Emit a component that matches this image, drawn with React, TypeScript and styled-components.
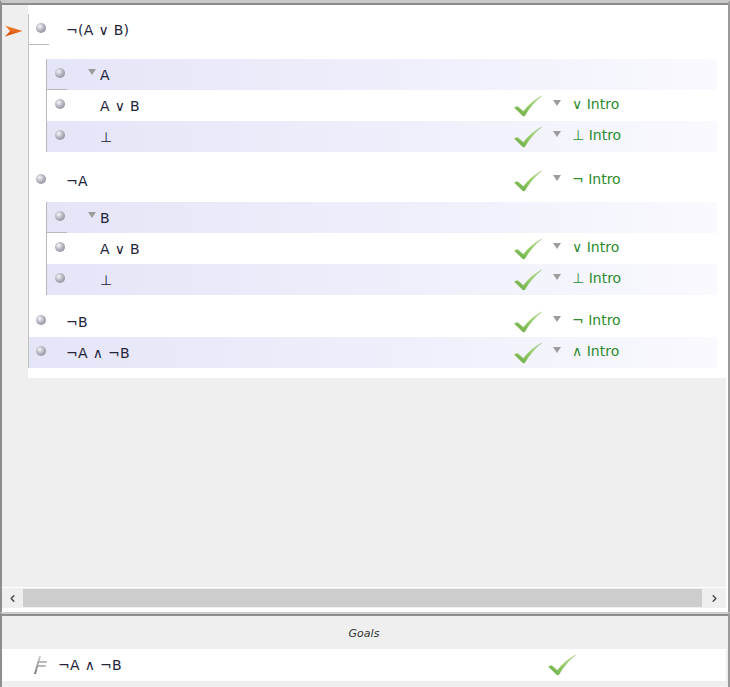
import React from "react";
import styled, { createGlobalStyle } from "styled-components";
import { ChevronLeft, ChevronRight } from "lucide-react";

const GlobalStyle = createGlobalStyle`
	html, body {
		margin: 0;
		padding: 0;
		background: #ffffff;
	}
	body {
		font-family: "DejaVu Sans", Verdana, sans-serif;
	}
	* {
		box-sizing: border-box;
	}
`;

const Frame = styled.div`
	width: 730px;
	height: 687px;
	display: flex;
	flex-direction: column;
	background: #ffffff;
	overflow: hidden;
`;

const ProofPanel = styled.div`
	flex: 1;
	display: flex;
	flex-direction: column;
	border-top: 3px solid #c9c9c9;
	border-left: 2px solid #8e8e8e;
	border-right: 2px solid #9a9a9a;
	box-shadow: inset 0 2px 0 #8c8c8c;
	padding-top: 2px;
	padding-bottom: 4px;
	background: #ffffff;
`;

const ScrollArea = styled.div`
	flex: 1;
	display: flex;
	align-items: flex-start;
	margin-right: 2px;
	background: #efefef;
`;

const Gutter = styled.div`
	width: 26px;
	flex: none;
	padding: 17px 0 0 3px;
`;

const Sheet = styled.div`
	flex: 1;
	background: #ffffff;
	padding: 9px 0 10px 0;
`;

const MainProof = styled.div`
	border-left: 1px solid #c2c2c2;
	display: flex;
	flex-direction: column;
`;

const Subproof = styled.div<{ $top: number }>`
	margin: ${(p) => p.$top}px 0 0 17px;
	border-left: 1px solid #b8b8b8;
	display: flex;
	flex-direction: column;
`;

const Row = styled.div<{ $shaded?: boolean; $top?: number; $sub?: boolean; $mark?: boolean }>`
	position: relative;
	display: grid;
	grid-template-columns: 1fr 203px;
	align-items: center;
	height: 31px;
	margin: ${(p) => p.$top ?? 0}px 9px 0 0;
	padding-left: ${(p) => (p.$sub ? 8 : 7)}px;
	background: ${(p) =>
		p.$shaded
			? "linear-gradient(to right, #e5e5f8 0%, #ededfb 45%, #f9f9fe 100%)"
			: "transparent"};

	&::after {
		content: "";
		display: ${(p) => (p.$mark ? "block" : "none")};
		position: absolute;
		left: 0;
		bottom: 0;
		width: 20px;
		height: 1px;
		background: #b8b8b8;
	}
`;

const Left = styled.div`
	display: flex;
	align-items: center;
`;

const Bullet = styled.span`
	width: 10px;
	height: 10px;
	border-radius: 50%;
	flex: none;
	margin-top: -4px;
	background: radial-gradient(circle at 38% 35%, #f6f6fa 0%, #b4b4c0 45%, #7c7c8a 100%);
`;

const Formula = styled.span<{ $indent: number }>`
	margin-left: ${(p) => p.$indent}px;
	font-size: 14px;
	color: #24243a;
	white-space: pre;
	letter-spacing: 0.3px;
`;

const Right = styled.div`
	display: flex;
	align-items: center;
`;

const RuleName = styled.span`
	margin-left: 11px;
	font-size: 14px;
	color: #2e8c2e;
	white-space: pre;
	margin-top: -3px;
`;

const Caret = styled.svg<{ $gap?: number }>`
	width: 8px;
	height: 6px;
	flex: none;
	margin-left: ${(p) => p.$gap ?? 0}px;
	margin-top: -6px;
`;

const ScrollBar = styled.div`
	height: 21px;
	display: flex;
	align-items: stretch;
	margin-right: 2px;
	border-top: 1px solid #ffffff;
	background: #efefef;
`;

const ScrollButton = styled.div<{ $w: number }>`
	width: ${(p) => p.$w}px;
	flex: none;
	display: flex;
	align-items: center;
	justify-content: center;
	color: #454545;
`;

const Track = styled.div`
	flex: 1;
	margin: 1px 0;
	background: #cdcdcd;
`;

const GoalsPanel = styled.div`
	height: 75px;
	flex: none;
	display: flex;
	flex-direction: column;
	border-top: 2px solid #cfcfcf;
	border-left: 2px solid #8e8e8e;
	border-right: 2px solid #9a9a9a;
	box-shadow: inset 0 2px 0 #8e8e8e;
	padding-top: 4px;
	background: #efefef;
`;

const GoalsHeader = styled.div`
	height: 31px;
	margin-right: 2px;
	display: flex;
	align-items: center;
	justify-content: center;
	font-size: 11px;
	font-style: italic;
	color: #333333;
`;

const GoalRow = styled.div`
	height: 32px;
	margin-right: 2px;
	display: flex;
	align-items: center;
	background: #ffffff;
	padding-left: 30px;
`;

const GoalText = styled.span`
	margin-left: 10px;
	font-size: 14px;
	color: #24243a;
	white-space: pre;
	letter-spacing: 0.3px;
`;

const GoalCheck = styled.div`
	margin-left: auto;
	margin-right: 150px;
	display: flex;
`;

function Check() {
	return (
		<svg width="28" height="22" viewBox="0 0 28 22">
			<defs>
				<linearGradient id="chk" x1="1" y1="0" x2="0" y2="1">
					<stop offset="0%" stopColor="#c2ea9c" />
					<stop offset="50%" stopColor="#92cc62" />
					<stop offset="100%" stopColor="#66aa42" />
				</linearGradient>
			</defs>
			<path
				d="M0.5 12.8 C1.8 11.6 3.2 11.3 4.2 12 L9.4 16.4 C14 10.6 20 5 27.6 1 C21.2 6 15.4 12.8 11 20.4 C10.5 21.3 9.2 21.3 8.5 20.6 Z"
				fill="url(#chk)"
				stroke="#74ae52"
				strokeWidth="0.35"
			/>
		</svg>
	);
}

function DownCaret({ gap }: { gap?: number }) {
	return (
		<Caret $gap={gap} viewBox="0 0 8 6">
			<polygon points="0,0 8,0 4,6" fill="#9c9c9c" />
		</Caret>
	);
}

function Justification({ rule }: { rule: string }) {
	return (
		<Right>
			<Check />
			<DownCaret gap={11} />
			<RuleName>{rule}</RuleName>
		</Right>
	);
}

type LineProps = {
	formula: string;
	rule?: string;
	shaded?: boolean;
	sub?: boolean;
	assume?: boolean;
	mark?: boolean;
	top?: number;
};

function ProofLine({ formula, rule, shaded, sub, assume, mark, top }: LineProps) {
	return (
		<Row $shaded={shaded} $sub={sub} $mark={mark} $top={top}>
			<Left>
				<Bullet />
				{assume ? (
					<>
						<DownCaret gap={23} />
						<Formula $indent={4}>{formula}</Formula>
					</>
				) : (
					<Formula $indent={sub ? 35 : 20}>{formula}</Formula>
				)}
			</Left>
			{rule ? <Justification rule={rule} /> : <span />}
		</Row>
	);
}

export default function App() {
	return (
		<>
			<GlobalStyle />
			<Frame>
				<ProofPanel>
					<ScrollArea>
						<Gutter>
							<svg width="18" height="12" viewBox="0 0 18 12">
								<defs>
									<linearGradient id="arr" x1="0" y1="0" x2="0" y2="1">
										<stop offset="0%" stopColor="#f7893a" />
										<stop offset="100%" stopColor="#d44a05" />
									</linearGradient>
								</defs>
								<polygon points="0,0.5 17.5,6 0,11.5 5,6" fill="url(#arr)" />
							</svg>
						</Gutter>
						<Sheet>
							<MainProof>
								<ProofLine formula="¬(A ∨ B)" mark />
								<Subproof $top={14}>
									<ProofLine formula="A" sub assume shaded mark />
									<ProofLine formula="A ∨ B" sub rule="∨ Intro" />
									<ProofLine formula="⊥" sub shaded rule="⊥ Intro" />
								</Subproof>
								<ProofLine formula="¬A" rule="¬ Intro" top={13} />
								<Subproof $top={6}>
									<ProofLine formula="B" sub assume shaded mark />
									<ProofLine formula="A ∨ B" sub rule="∨ Intro" />
									<ProofLine formula="⊥" sub shaded rule="⊥ Intro" />
								</Subproof>
								<ProofLine formula="¬B" rule="¬ Intro" top={11} />
								<ProofLine formula="¬A ∧ ¬B" shaded rule="∧ Intro" />
							</MainProof>
						</Sheet>
					</ScrollArea>
					<ScrollBar>
						<ScrollButton $w={21}>
							<ChevronLeft size={11} strokeWidth={3} />
						</ScrollButton>
						<Track />
						<ScrollButton $w={24}>
							<ChevronRight size={11} strokeWidth={3} />
						</ScrollButton>
					</ScrollBar>
				</ProofPanel>
				<GoalsPanel>
					<GoalsHeader>Goals</GoalsHeader>
					<GoalRow>
						<svg width="16" height="20" viewBox="0 0 16 20">
							<defs>
								<linearGradient id="tt" x1="0" y1="0" x2="0" y2="1">
									<stop offset="0%" stopColor="#d0d0d0" />
									<stop offset="100%" stopColor="#767676" />
								</linearGradient>
							</defs>
							<path d="M7 1 L9 1 L4 19 L2 19 Z" fill="url(#tt)" />
							<path d="M6.2 6 L15 6 L14.6 7.6 L5.8 7.6 Z" fill="url(#tt)" />
							<path d="M5.2 10 L14 10 L13.6 11.6 L4.8 11.6 Z" fill="url(#tt)" />
						</svg>
						<GoalText>¬A ∧ ¬B</GoalText>
						<GoalCheck>
							<Check />
						</GoalCheck>
					</GoalRow>
				</GoalsPanel>
			</Frame>
		</>
	);
}
